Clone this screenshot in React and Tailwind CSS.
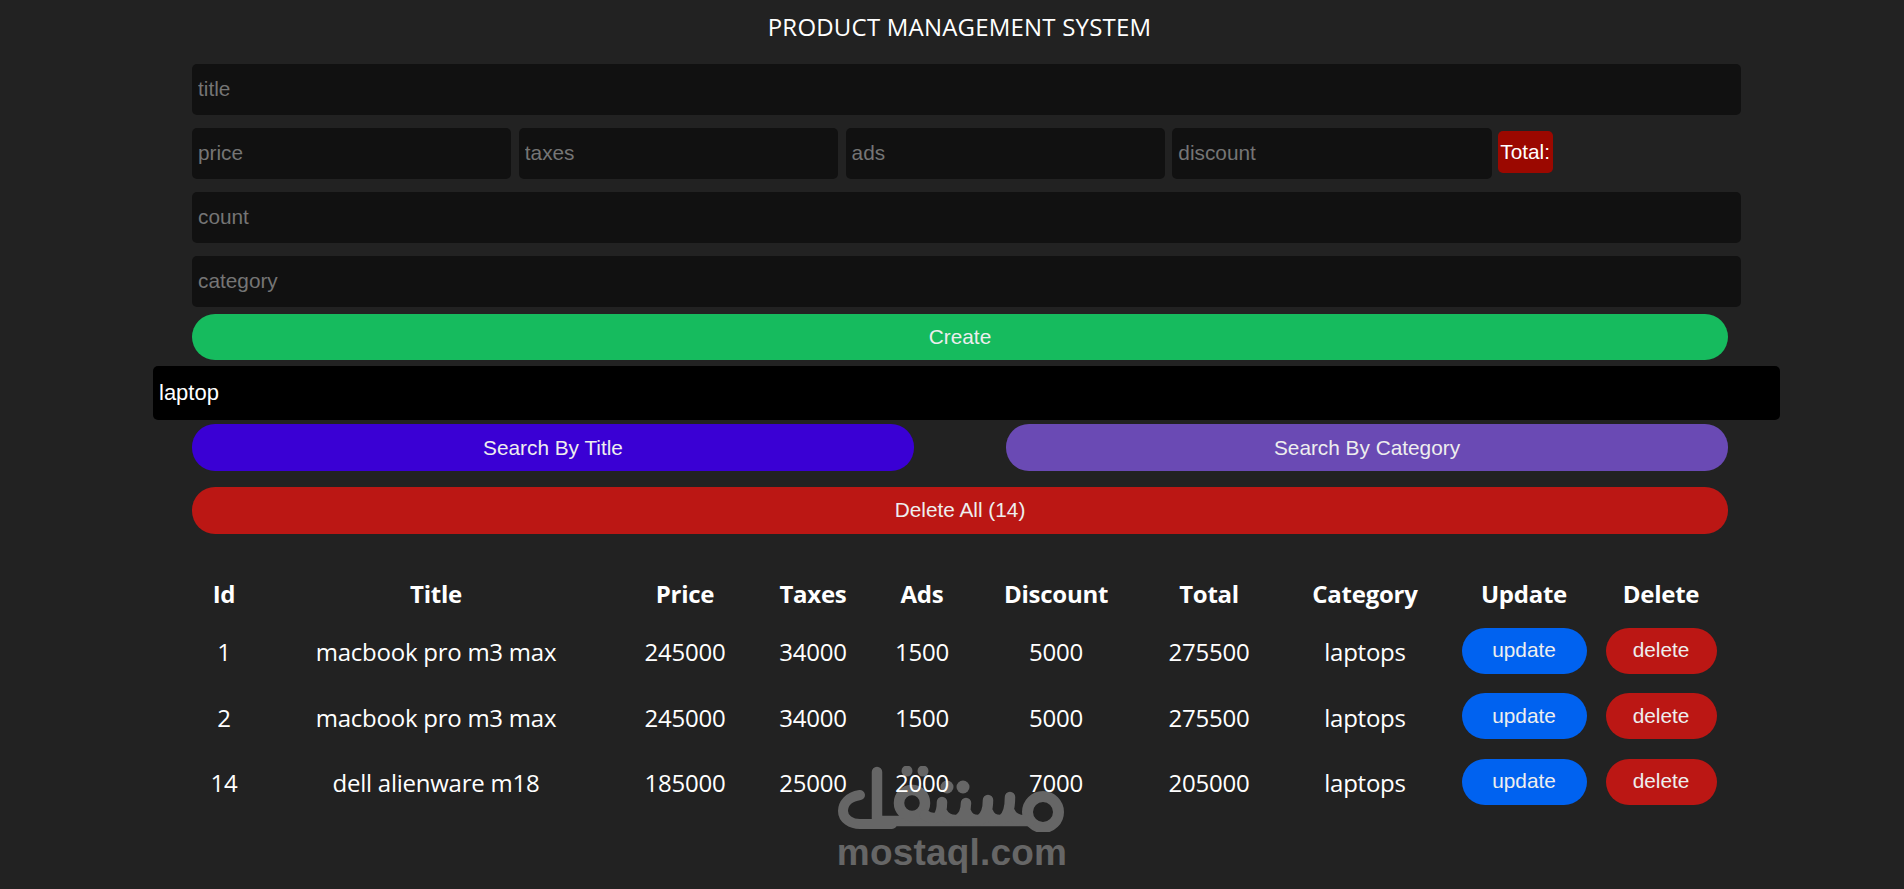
import React from "react";

const ARIAL = "font-['Liberation_Sans',Arial,sans-serif]";
const UI = "font-['Open_Sans','Noto_Sans',sans-serif]";

const rows = [
  ["1", "macbook pro m3 max", "245000", "34000", "1500", "5000", "275500", "laptops"],
  ["2", "macbook pro m3 max", "245000", "34000", "1500", "5000", "275500", "laptops"],
  ["14", "dell alienware m18", "185000", "25000", "2000", "7000", "205000", "laptops"],
];
const heads = ["Id", "Title", "Price", "Taxes", "Ads", "Discount", "Total", "Category", "Update", "Delete"];

function Field({ placeholder, className }) {
  return (
    <input
      placeholder={placeholder}
      className={`h-[51px] rounded-[5px] bg-[#111111] px-[6px] pb-[2px] text-[20.8px] text-white outline-none placeholder:text-[#757575] ${className}`}
    />
  );
}

function Pill({ children, className }) {
  return (
    <button className={`rounded-[23px] text-[20.8px] text-[#eeeeee] ${className}`}>{children}</button>
  );
}

function Watermark() {
  return (
    <div className="absolute left-[836px] top-[766px] z-0 flex w-[232px] flex-col items-center text-[#666666]">
      <svg width="232" height="66" viewBox="836 766 232 66" fill="none" stroke="#666666" strokeWidth="10.5" strokeLinecap="round" strokeLinejoin="round">
        <path d="M877 772V821H1030" />
        <path d="M860 795C848 797 843 804 843 811C843 819 851 824 860 824H892" strokeWidth="10" />
        <circle cx="912" cy="803" r="13" />
        <circle cx="1043" cy="812" r="15.5" strokeWidth="11" />
        <path d="M925 815Q932 820 938 817Q942 812 942 802M942 812Q946 821 958 820Q966 815 966 803M966 812Q969 821 980 820Q988 815 988 800M988 812Q991 821 1002 820Q1010 815 1010 797M1010 812Q1013 821 1030 821" />
        <g fill="#666666" stroke="none">
          <circle cx="907" cy="771" r="5.5" />
          <circle cx="923" cy="771" r="5.5" />
          <circle cx="947" cy="787" r="6.5" />
          <circle cx="963" cy="787" r="6.5" />
        </g>
      </svg>
      <div className={`${ARIAL} -mt-[1px] text-[37px] font-bold leading-[44px] tracking-[0.2px]`}>mostaql.com</div>
    </div>
  );
}

export default function App() {
  return (
    <div className={`relative h-[889px] overflow-hidden bg-[#222222] text-white ${ARIAL}`}>
      <Watermark />
      <h1 className={`${UI} flex h-[54px] items-center justify-center pl-[15px] text-[24px] font-normal tracking-[0.2px]`}>
        PRODUCT MANAGEMENT SYSTEM
      </h1>
      <div className="ml-[192px] w-[1536px] pt-[10px]">
        <div className="flex flex-col gap-[13px]">
          <Field placeholder="title" className="w-[1549px]" />
          <div className="flex w-[1549px] gap-[7.4px]">
            <Field placeholder="price" className="w-[319.4px]" />
            <Field placeholder="taxes" className="w-[319.4px]" />
            <Field placeholder="ads" className="w-[319.4px]" />
            <Field placeholder="discount" className="w-[319.4px]" />
            <div className="-ml-[1.5px] mt-[3px] flex h-[42px] w-[55px] items-center justify-center rounded-[5px] bg-[#9b0800] pb-[1px] text-[20.8px] text-white">
              Total:
            </div>
          </div>
          <Field placeholder="count" className="w-[1549px]" />
          <Field placeholder="category" className="w-[1549px]" />
        </div>
        <Pill className="mt-[7px] block h-[46px] w-full bg-[#16bb5e]">Create</Pill>
        <input
          defaultValue="laptop"
          className="-ml-[39px] mt-[6px] block h-[54px] w-[1627px] rounded-[5px] bg-black px-[6px] text-[22px] text-white outline-none"
        />
        <div className="mt-[4px] flex justify-between">
          <Pill className="h-[47px] w-[722px] bg-[#3a00d4]">Search By Title</Pill>
          <Pill className="h-[47px] w-[722px] bg-[#6a4ab4]">Search By Category</Pill>
        </div>
        <Pill className="mt-[16px] block h-[47px] w-full bg-[#bb1714] pb-[2px]">Delete All (14)</Pill>
      </div>
      <table className={`${UI} relative z-10 ml-[192px] mt-[35px] w-[1534px] table-fixed border-collapse text-center text-[24px] tracking-[-0.25px]`}>
        <colgroup>
          <col className="w-[64px]" />
          <col className="w-[360px]" />
          <col className="w-[138px]" />
          <col className="w-[118px]" />
          <col className="w-[100px]" />
          <col className="w-[168px]" />
          <col className="w-[138px]" />
          <col className="w-[174px]" />
          <col className="w-[144px]" />
          <col className="w-[130px]" />
        </colgroup>
        <thead>
          <tr className="h-[49px]">
            {heads.map((h) => (
              <th key={h} className="p-0 font-bold">{h}</th>
            ))}
          </tr>
        </thead>
        <tbody>
          {rows.map((r) => (
            <tr key={r[0]} className="h-[65.5px]">
              {r.map((c, i) => (
                <td key={i} className="p-0 pt-[3px]">{c}</td>
              ))}
              <td className="p-0">
                <Pill className={`${ARIAL} h-[46px] w-[125px] bg-[#0062f0] pb-[2px] tracking-normal`}>update</Pill>
              </td>
              <td className="p-0">
                <Pill className={`${ARIAL} h-[46px] w-[111px] bg-[#bb1714] pb-[2px] tracking-normal`}>delete</Pill>
              </td>
            </tr>
          ))}
        </tbody>
      </table>
    </div>
  );
}
